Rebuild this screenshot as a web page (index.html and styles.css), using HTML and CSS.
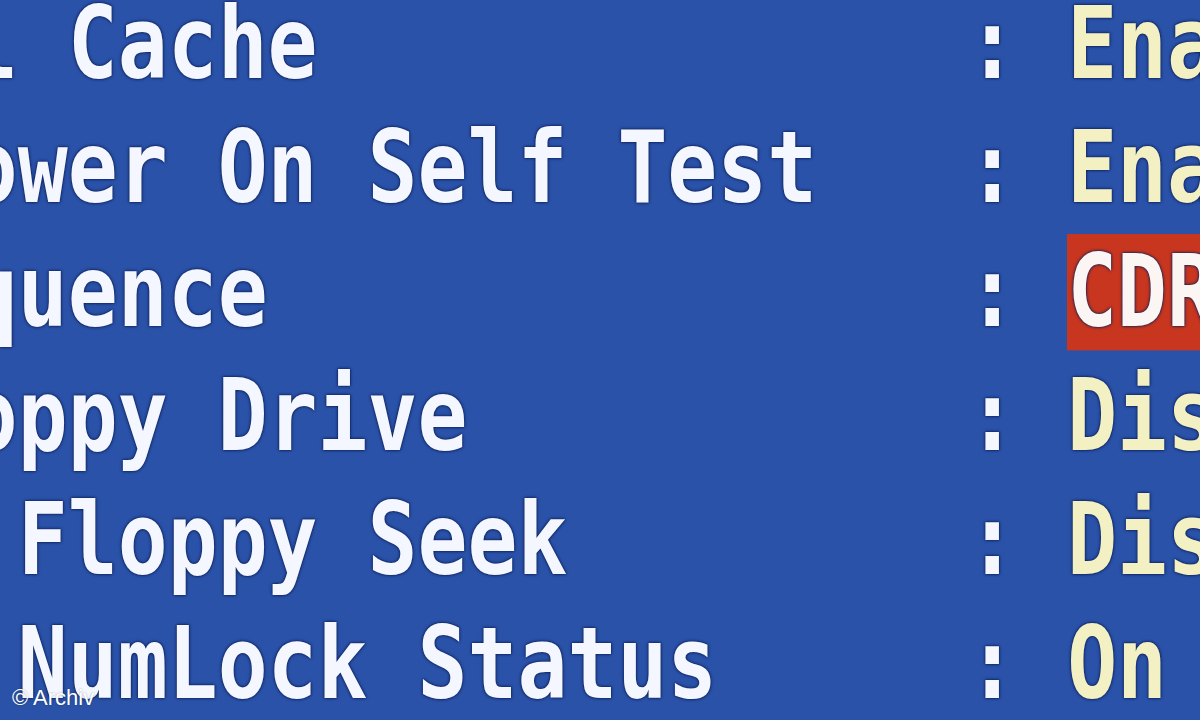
FILE: index.html
```html
<!DOCTYPE html>
<html lang="en">
<head>
  <meta charset="UTF-8">
  <meta name="viewport" content="width=device-width, initial-scale=1.0">
  <title>BIOS Features Setup</title>
  <link rel="stylesheet" href="styles.css">
</head>
<body>
  <div class="screen">
    <div class="setup">
      <div class="row"><span class="label">External Cache</span><span class="sep">:</span><span class="value">Enabled</span></div>
      <div class="row"><span class="label">Quick Power On Self Test</span><span class="sep">:</span><span class="value">Enabled</span></div>
      <div class="row"><span class="label">Boot Sequence</span><span class="sep">:</span><span class="value"><span class="selected">CDROM,C,A</span></span></div>
      <div class="row"><span class="label">Swap Floppy Drive</span><span class="sep">:</span><span class="value">Disabled</span></div>
      <div class="row"><span class="label">Boot Up Floppy Seek</span><span class="sep">:</span><span class="value">Disabled</span></div>
      <div class="row"><span class="label">Boot Up NumLock Status</span><span class="sep">:</span><span class="value">On</span></div>
    </div>
    <div class="credit">&copy; Archiv</div>
  </div>
</body>
</html>
```

FILE: styles.css
```css
body {
  margin: 0;
  background-color: #2a52a8;
  overflow: hidden;
}
.screen {
  position: relative;
  width: 1200px;
  height: 720px;
  overflow: hidden;
  background-color: #2a52a8;
}
.setup {
  margin-top: -18.5px;
  margin-left: -382px;
  font-family: "DejaVu Sans Mono", monospace;
  font-weight: bold;
  font-size: 83px;
  line-height: 103.33px;
  color: #f4f7ff;
  text-shadow: 0 0 3px #0b1d55, 0 0 2px #0b1d55;
  transform: scaleY(1.2);
  transform-origin: top left;
}
.row {
  display: grid;
  grid-template-columns: 27ch 2ch auto;
  white-space: pre;
}
.value {
  color: #f3f1c4;
}
.selected {
  background-color: #c9361f;
  color: #fbf6f4;
}
.credit {
  position: absolute;
  left: 12px;
  bottom: 11px;
  font-family: "Liberation Sans", Arial, sans-serif;
  font-size: 22px;
  line-height: 22px;
  color: #ffffff;
  text-shadow: 0 0 2px rgba(0,0,0,0.35);
}
```
